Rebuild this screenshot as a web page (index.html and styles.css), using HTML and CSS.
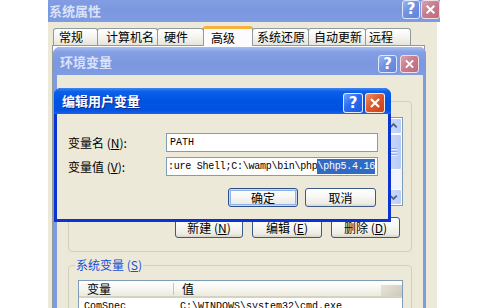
FILE: index.html
```html
<!DOCTYPE html>
<html lang="zh-CN">
<head>
<meta charset="utf-8">
<title>编辑用户变量</title>
<link rel="stylesheet" href="styles.css">
</head>
<body>
<div class="win sys">
  <div class="tb inactive sys-tb">
    <span class="tt">系统属性</span>
    <span class="cb help i-help">?</span>
    <span class="cb close i-close"><svg viewBox="0 0 20 20"><path d="M5.5 5.5L14.5 14.5M14.5 5.5L5.5 14.5" stroke="#fff" stroke-width="2.4"/></svg></span>
  </div>
  <div class="sysbody">
    <div class="tabs">
      <span class="tab t1">常规</span>
      <span class="tab t2">计算机名</span>
      <span class="tab t3">硬件</span>
      <span class="tab t4 on">高级</span>
      <span class="tab t5">系统还原</span>
      <span class="tab t6">自动更新</span>
      <span class="tab t7">远程</span>
    </div>
    <div class="page"></div>
  </div>
</div>

<div class="win env">
  <div class="tb inactive env-tb">
    <span class="tt">环境变量</span>
    <span class="cb help i-help">?</span>
    <span class="cb close i-close"><svg viewBox="0 0 20 20"><path d="M5.5 5.5L14.5 14.5M14.5 5.5L5.5 14.5" stroke="#fff" stroke-width="2.4"/></svg></span>
  </div>
  <div class="envbody">
    <div class="grp ugrp">
      <div class="lb">
        <div class="vscroll">
          <span class="sbtn"><svg viewBox="0 0 15 15"><path d="M4 9L7.5 5.5L11 9" fill="none" stroke="#4d6185" stroke-width="2"/></svg></span>
          <span class="thumb"><i></i><i></i><i></i></span>
          <span class="track"></span>
          <span class="sbtn"><svg viewBox="0 0 15 15"><path d="M4 6L7.5 9.5L11 6" fill="none" stroke="#4d6185" stroke-width="2"/></svg></span>
        </div>
      </div>
      <div class="brow">
        <button class="btn b-new">新建 (<u>N</u>)</button>
        <button class="btn b-edit">编辑 (<u>E</u>)</button>
        <button class="btn b-del">删除 (<u>D</u>)</button>
      </div>
    </div>
    <fieldset class="sgrp">
      <legend>系统变量 (<u>S</u>)</legend>
      <div class="lv">
        <div class="lvhead"><span class="c1">变量</span><span class="c2">值</span><span class="lvsb"></span></div>
        <div class="lvrow"><span class="c1">ComSpec</span><span class="c2">C:\WINDOWS\system32\cmd.exe</span></div>
      </div>
    </fieldset>
  </div>
</div>

<div class="win edit">
  <div class="tb active edit-tb">
    <span class="tt">编辑用户变量</span>
    <span class="cb help a-help">?</span>
    <span class="cb close a-close"><svg viewBox="0 0 20 20"><path d="M5.5 5.5L14.5 14.5M14.5 5.5L5.5 14.5" stroke="#fff" stroke-width="2.4"/></svg></span>
  </div>
  <div class="editbody">
    <div class="form">
      <label class="lbl">变量名 (<u>N</u>):</label>
      <div class="inp">PATH</div>
      <label class="lbl">变量值 (<u>V</u>):</label>
      <div class="inp val"><span>:ure Shell;C:\wamp\bin\php</span><span class="sel">\php5.4.16</span></div>
    </div>
    <div class="brow2">
      <button class="btn def b-ok">确定</button>
      <button class="btn b-cancel">取消</button>
    </div>
  </div>
</div>
</body>
</html>
```

FILE: styles.css
```css
html, body {
  margin: 0;
  padding: 0;
}
body {
  width: 500px;
  height: 308px;
  overflow: hidden;
  position: relative;
  background: #fff;
  font-family: "Noto Sans CJK SC", "Noto Sans", sans-serif;
  font-size: 12px;
  color: #000;
}
u { text-decoration: underline; }

.win {
  position: absolute;
  box-sizing: border-box;
  display: flex;
  flex-direction: column;
}

/* ---------- title bars ---------- */
.tb {
  display: flex;
  align-items: flex-start;
  flex: none;
  box-sizing: border-box;
}
.tt {
  flex: 1;
  font-weight: bold;
  font-size: 13px;
  line-height: 16px;
  white-space: nowrap;
}
.tb.inactive {
  background: linear-gradient(#a9bdf0 0%, #849fe3 18%, #7b97e0 60%, #7f9be2 100%);
  color: #d9e2f8;
}
.tb.active {
  background: linear-gradient(#3d86f6 0%, #0c5fe8 14%, #0054e3 50%, #0352e0 86%, #1c64e6 100%);
  color: #fff;
}
.tb.active .tt { text-shadow: 1px 1px 0 #0b2a8a; }

.cb {
  box-sizing: border-box;
  display: flex;
  align-items: center;
  justify-content: center;
  border: 1px solid rgba(255,255,255,0.85);
  border-radius: 3px;
  color: #fff;
  font-family: "DejaVu Sans", "Liberation Sans", sans-serif;
  font-weight: bold;
  font-size: 15px;
  line-height: 1;
  flex: none;
}
.cb svg { width: 100%; height: 100%; display: block; }
.i-help { background: linear-gradient(135deg, #9ab3ef 0%, #7192e2 45%, #5f84dc 100%); border-color: #dfe7fb; }
.i-close { background: linear-gradient(135deg, #dba0ad 0%, #c97d8e 45%, #bc6c7e 100%); border-color: #f1dde2; }
.a-help { background: linear-gradient(135deg, #6fa0ff 0%, #2a6cf0 45%, #1b59df 100%); }
.a-close { background: linear-gradient(135deg, #f0906b 0%, #e0582c 45%, #c9411b 100%); }

/* ---------- system properties ---------- */
.sys {
  left: 48px;
  top: -8px;
  width: 392px;
  height: 320px;
}
.sys-tb { height: 30px; }
.sys-tb .tt { margin: 11px 0 0 1px; }
.sys-tb .cb { margin-top: 8px; height: 19px; }
.sys-tb .help { width: 18px; margin-right: 1px; }
.sys-tb .close { width: 19px; }

.sysbody {
  flex: 1;
  margin-right: 3px;
  background: #ece9d8;
  padding-top: 4px;
  display: flex;
  flex-direction: column;
}
.tabs {
  display: flex;
  align-items: flex-end;
  height: 20px;
  padding-left: 5px;
  flex: none;
}
.tab {
  box-sizing: border-box;
  height: 17px;
  margin-bottom: 1px;
  border: 1px solid #919b9c;
  border-bottom: none;
  border-radius: 3px 3px 0 0;
  background: linear-gradient(#ffffff, #f4f3ee 55%, #e6e4da);
  display: flex;
  align-items: center;
  padding-left: 5px;
  line-height: 14px;
  white-space: nowrap;
}
.tab + .tab { margin-left: -1px; }
.t1 { width: 45px; }
.t2 { width: 61px; padding-left: 8px; }
.t3 { width: 47px; padding-left: 6px; }
.t4 { width: 50px; }
.t5 { width: 57px; padding-left: 4px; }
.t6 { width: 58px; padding-left: 5px; }
.t7 { width: 46px; padding-left: 3px; }
.tab.on {
  height: 20px;
  margin-bottom: 0;
  background: #fcfcfe;
  border-top: 3px solid #f7b23d;
  padding-left: 7px;
  position: relative;
  z-index: 1;
}
.page {
  flex: 1;
  margin: -1px 12px 0 4px;
  border: 1px solid #919b9c;
  background: #fcfcfe;
}

/* ---------- environment variables ---------- */
.env {
  left: 53px;
  top: 47px;
  width: 373px;
  height: 275px;
  background: #7e9ae1;
  border-radius: 7px 7px 0 0;
  overflow: hidden;
}
.env-tb { height: 28px; padding-right: 7px; }
.env-tb .tt { margin: 7px 0 0 7px; }
.env-tb .cb { margin-top: 8px; width: 19px; height: 18px; }
.env-tb .help { margin-right: 3px; }

.envbody {
  flex: 1;
  margin: 0 3px 0 4px;
  background: #ece9d8;
  display: flex;
  flex-direction: column;
}
.ugrp {
  margin: 26px 11px 0;
  height: 151px;
  box-sizing: border-box;
  border: 1px solid #d0d0bf;
  border-radius: 4px;
  padding: 15px 8px 0 9px;
  display: flex;
  flex-direction: column;
  flex: none;
}
.lb {
  height: 89px;
  box-sizing: border-box;
  border: 1px solid #7f9db9;
  background: #fff;
  display: flex;
  justify-content: flex-end;
}
.vscroll {
  width: 17px;
  display: flex;
  flex-direction: column;
  background: #f3f1ec;
}
.sbtn {
  height: 16px;
  flex: none;
  box-sizing: border-box;
  border: 1px solid #fff;
  border-radius: 2px;
  background: linear-gradient(90deg, #cfdcfc, #bccdf9);
}
.sbtn svg { width: 15px; height: 14px; display: block; }
.thumb {
  height: 36px;
  flex: none;
  box-sizing: border-box;
  border: 1px solid #fff;
  border-radius: 2px;
  background: linear-gradient(90deg, #cddbfc, #b8cbf8);
  display: flex;
  flex-direction: column;
  align-items: center;
  justify-content: center;
  gap: 1px;
}
.thumb i {
  display: block;
  width: 7px;
  height: 1px;
  background: #8faaf0;
  border-bottom: 1px solid #eef3fe;
}
.track { flex: 1; background: #f1f4fd; }

.brow {
  display: flex;
  justify-content: flex-end;
  gap: 9px;
  margin-top: 11px;
  margin-right: 3px;
}
.btn {
  box-sizing: border-box;
  border: 1px solid #3b5a86;
  border-radius: 3px;
  background: linear-gradient(#ffffff 0%, #f7f7f3 45%, #ecebe4 85%, #d8d4c8 100%);
  font-family: "Noto Sans CJK SC", "Noto Sans", sans-serif;
  font-size: 12px;
  line-height: 14px;
  color: #000;
  padding: 0;
  margin: 0;
  white-space: nowrap;
}
.brow .btn { height: 21px; }
.b-new { width: 68px; }
.b-edit { width: 70px; }
.b-del { width: 69px; }

.sgrp {
  margin: 6px 11px 0;
  border: 1px solid #d0d0bf;
  border-radius: 4px;
  padding: 0 8px 0 9px;
  min-width: 0;
  flex: 1;
}
.sgrp legend {
  padding: 0 1px;
  margin-left: -3px;
  line-height: 14px;
  font-size: 12px;
  color: #1450d8;
}
.lv {
  margin-top: 8px;
  border: 1px solid #7f9db9;
  border-bottom: none;
  background: #fff;
  height: 40px;
}
.lvhead {
  height: 17px;
  box-sizing: border-box;
  display: flex;
  background: linear-gradient(#ffffff, #f6f5f0 55%, #ebeadb);
  border-bottom: 2px solid #d6d2c2;
  line-height: 15px;
}
.lvhead .c1 {
  width: 95px;
  box-sizing: border-box;
  padding-left: 8px;
  border-right: 1px solid #c7c5b2;
  margin: 2px 0 1px;
  line-height: 12px;
}
.lvhead .c2 { flex: 1; padding-left: 8px; }
.lvsb {
  width: 21px;
  margin-top: 4px;
  background: linear-gradient(135deg, #e6e4da, #cdc9bb);
}
.lvrow {
  display: flex;
  font-family: "Liberation Mono", monospace;
  font-size: 10px;
  line-height: 14px;
  padding-top: 2px;
}
.lvrow .c1 { width: 95px; padding-left: 5px; box-sizing: border-box; }
.lvrow .c2 { padding-left: 6px; }

/* ---------- edit user variable ---------- */
.edit {
  left: 54px;
  top: 88px;
  width: 337px;
  height: 134px;
  background: #0b33cf;
  border-radius: 7px 7px 0 0;
  overflow: hidden;
}
.edit-tb { height: 26px; padding-right: 6px; }
.edit-tb .tt { margin: 5px 0 0 8px; }
.edit-tb .cb { margin-top: 5px; width: 20px; height: 20px; }
.edit-tb .help { margin-right: 2px; }

.editbody {
  flex: 1;
  margin: 0 3px 3px;
  background: #ece9d8;
}
.form {
  display: grid;
  grid-template-columns: 98px 212px;
  row-gap: 5px;
  align-items: center;
  padding: 19px 0 0 11px;
}
.lbl {
  line-height: 14px;
  white-space: nowrap;
}
.inp {
  height: 19px;
  box-sizing: border-box;
  border: 1px solid #7f9db9;
  background: #fff;
  font-family: "Liberation Mono", monospace;
  font-size: 10px;
  display: flex;
  align-items: center;
  padding: 0 2px 0 3px;
  overflow: hidden;
  white-space: nowrap;
}
.val {
  justify-content: flex-end;
  letter-spacing: -0.25px;
}
.val span { flex: none; }
.sel {
  background: #316ac5;
  color: #fff;
  line-height: 15px;
}
.brow2 {
  display: flex;
  justify-content: flex-end;
  gap: 7px;
  margin-top: 12px;
  padding-right: 12px;
}
.brow2 .btn { height: 19px; }
.b-ok { width: 70px; }
.b-cancel { width: 71px; }
.btn.def {
  border-color: #2d4f86;
  box-shadow: inset 0 0 0 1px #c6dbfb, inset 0 0 0 2px #8fb1ee;
}
```
